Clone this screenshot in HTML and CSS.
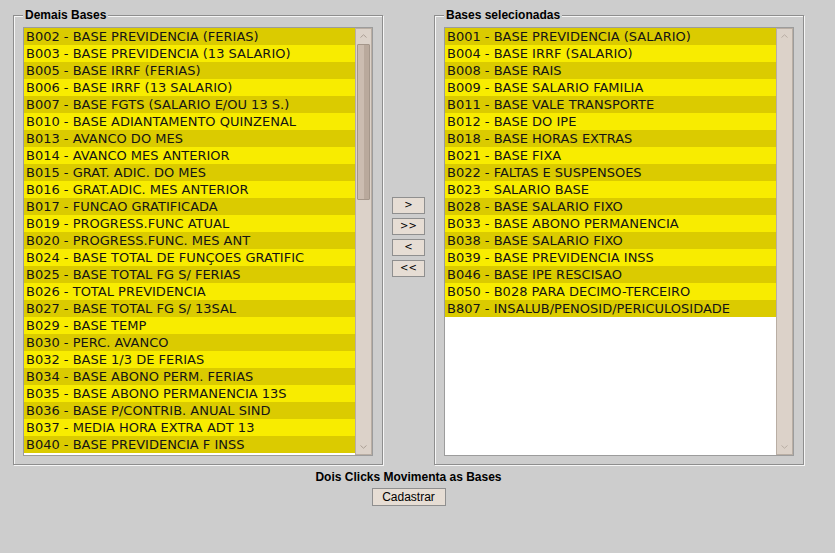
FILE: index.html
```html
<!DOCTYPE html>
<html lang="pt">
<head>
<meta charset="utf-8">
<title>Bases</title>
<link rel="stylesheet" href="styles.css">
</head>
<body>
<div class="page">
  <div class="panels">
    <fieldset class="box">
      <legend class="box-title">Demais Bases</legend>
      <div class="list">
        <div class="rows">
          <div class="row">B002 - BASE PREVIDENCIA (FERIAS)</div>
          <div class="row">B003 - BASE PREVIDENCIA (13 SALARIO)</div>
          <div class="row">B005 - BASE IRRF (FERIAS)</div>
          <div class="row">B006 - BASE IRRF (13 SALARIO)</div>
          <div class="row">B007 - BASE FGTS (SALARIO E/OU 13 S.)</div>
          <div class="row">B010 - BASE ADIANTAMENTO QUINZENAL</div>
          <div class="row">B013 - AVANCO DO MES</div>
          <div class="row">B014 - AVANCO MES ANTERIOR</div>
          <div class="row">B015 - GRAT. ADIC. DO MES</div>
          <div class="row">B016 - GRAT.ADIC. MES ANTERIOR</div>
          <div class="row">B017 - FUNCAO GRATIFICADA</div>
          <div class="row">B019 - PROGRESS.FUNC ATUAL</div>
          <div class="row">B020 - PROGRESS.FUNC. MES ANT</div>
          <div class="row">B024 - BASE TOTAL DE FUNÇOES GRATIFIC</div>
          <div class="row">B025 - BASE TOTAL FG S/ FERIAS</div>
          <div class="row">B026 - TOTAL PREVIDENCIA</div>
          <div class="row">B027 - BASE TOTAL FG S/ 13SAL</div>
          <div class="row">B029 - BASE TEMP</div>
          <div class="row">B030 - PERC. AVANCO</div>
          <div class="row">B032 - BASE 1/3 DE FERIAS</div>
          <div class="row">B034 - BASE ABONO PERM. FERIAS</div>
          <div class="row">B035 - BASE ABONO PERMANENCIA 13S</div>
          <div class="row">B036 - BASE P/CONTRIB. ANUAL SIND</div>
          <div class="row">B037 - MEDIA HORA EXTRA ADT 13</div>
          <div class="row">B040 - BASE PREVIDENCIA F INSS</div>
        </div>
        <div class="sb">
          <div class="sb-btn"><svg width="7" height="4" viewBox="0 0 7 4"><path d="M0.5 3.5 L3.5 0.8 L6.5 3.5" fill="none" stroke="#ab9f95" stroke-width="1"/></svg></div>
          <div class="sb-track"><div class="sb-thumb"></div></div>
          <div class="sb-btn"><svg width="7" height="4" viewBox="0 0 7 4"><path d="M0.5 0.5 L3.5 3.2 L6.5 0.5" fill="none" stroke="#ab9f95" stroke-width="1"/></svg></div>
        </div>
      </div>
    </fieldset>

    <div class="moves">
      <button class="move">&gt;</button>
      <button class="move">&gt;&gt;</button>
      <button class="move">&lt;</button>
      <button class="move">&lt;&lt;</button>
    </div>

    <fieldset class="box">
      <legend class="box-title">Bases selecionadas</legend>
      <div class="list">
        <div class="rows">
          <div class="row">B001 - BASE PREVIDENCIA (SALARIO)</div>
          <div class="row">B004 - BASE IRRF (SALARIO)</div>
          <div class="row">B008 - BASE RAIS</div>
          <div class="row">B009 - BASE SALARIO FAMILIA</div>
          <div class="row">B011 - BASE VALE TRANSPORTE</div>
          <div class="row">B012 - BASE DO IPE</div>
          <div class="row">B018 - BASE HORAS EXTRAS</div>
          <div class="row">B021 - BASE FIXA</div>
          <div class="row">B022 - FALTAS E SUSPENSOES</div>
          <div class="row">B023 - SALARIO BASE</div>
          <div class="row">B028 - BASE SALARIO FIXO</div>
          <div class="row">B033 - BASE ABONO PERMANENCIA</div>
          <div class="row">B038 - BASE SALARIO FIXO</div>
          <div class="row">B039 - BASE PREVIDENCIA INSS</div>
          <div class="row">B046 - BASE IPE RESCISAO</div>
          <div class="row">B050 - B028 PARA DECIMO-TERCEIRO</div>
          <div class="row">B807 - INSALUB/PENOSID/PERICULOSIDADE</div>
        </div>
        <div class="sb">
          <div class="sb-btn"><svg width="7" height="4" viewBox="0 0 7 4"><path d="M0.5 3.5 L3.5 0.8 L6.5 3.5" fill="none" stroke="#b8ada3" stroke-width="1"/></svg></div>
          <div class="sb-track"></div>
          <div class="sb-btn"><svg width="7" height="4" viewBox="0 0 7 4"><path d="M0.5 0.5 L3.5 3.2 L6.5 0.5" fill="none" stroke="#b8ada3" stroke-width="1"/></svg></div>
        </div>
      </div>
    </fieldset>
  </div>

  <div class="caption">Dois Clicks Movimenta as Bases</div>
  <div class="actions">
    <button class="submit">Cadastrar</button>
  </div>
</div>
</body>
</html>
```
FILE: styles.css
```css
html, body {
  margin: 0;
  padding: 0;
}
body {
  background: #cdcdcd;
  font-family: "DejaVu Sans", sans-serif;
  color: #111;
}
.page {
  width: 791px;
  padding: 8px 0 0 13px;
}
.panels {
  display: flex;
  gap: 9px;
  align-items: stretch;
}
.box {
  width: 370px;
  box-sizing: border-box;
  margin: 0;
  padding: 5px 9px 8px 9px;
  border: 1px solid #8e8e8e;
  box-shadow: inset 1px 1px 0 #f6f6f6, 1px 1px 0 #f6f6f6;
  min-width: 0;
}
.box-title {
  padding: 0 2px;
  font: bold 12px/14px "Liberation Sans", Arial, sans-serif;
  color: #000;
  background: #cdcdcd;
}
.list {
  display: flex;
  height: 429px;
  box-sizing: border-box;
  border: 1px solid #9c9c9c;
  background: #fff;
}
.rows {
  flex: 1;
  overflow: hidden;
  min-width: 0;
}
.row {
  height: 17px;
  line-height: 17px;
  padding-left: 2px;
  font-size: 13px;
  white-space: nowrap;
  color: #141414;
}
.row:nth-child(odd) {
  background: #dbcb00;
}
.row:nth-child(even) {
  background: #f8ec00;
}
.sb {
  width: 17px;
  box-sizing: border-box;
  border: 1px solid #b9aea4;
  background: #dcd2c9;
  display: flex;
  flex-direction: column;
}
.sb-btn {
  height: 14px;
  display: flex;
  align-items: center;
  justify-content: center;
}
.sb-track {
  flex: 1;
  padding: 1px 1px;
}
.sb-thumb {
  height: 156px;
  box-sizing: border-box;
  border: 1px solid #a4968a;
  border-radius: 1px;
  background: linear-gradient(to right, #cbbcb0 0, #cbbcb0 55%, #b9a99c 55%, #b9a99c 100%);
}
.moves {
  width: 33px;
  display: flex;
  flex-direction: column;
  justify-content: center;
  gap: 4px;
}
.move {
  width: 33px;
  height: 17px;
  margin: 0;
  padding: 0;
  box-sizing: border-box;
  border: 1px solid #8f8f8f;
  background: #e6ddd4;
  font: 10px/14px "DejaVu Sans", sans-serif;
  color: #000;
}
.caption {
  margin-top: 5px;
  text-align: center;
  font: bold 12px/14px "Liberation Sans", Arial, sans-serif;
  color: #000;
}
.actions {
  display: flex;
  justify-content: center;
  margin-top: 4px;
}
.submit {
  width: 74px;
  height: 18px;
  margin: 0;
  padding: 0;
  box-sizing: border-box;
  border: 1px solid #8f8f8f;
  background: #e6ddd4;
  font: 12px/16px "Liberation Sans", Arial, sans-serif;
  color: #000;
}
```
